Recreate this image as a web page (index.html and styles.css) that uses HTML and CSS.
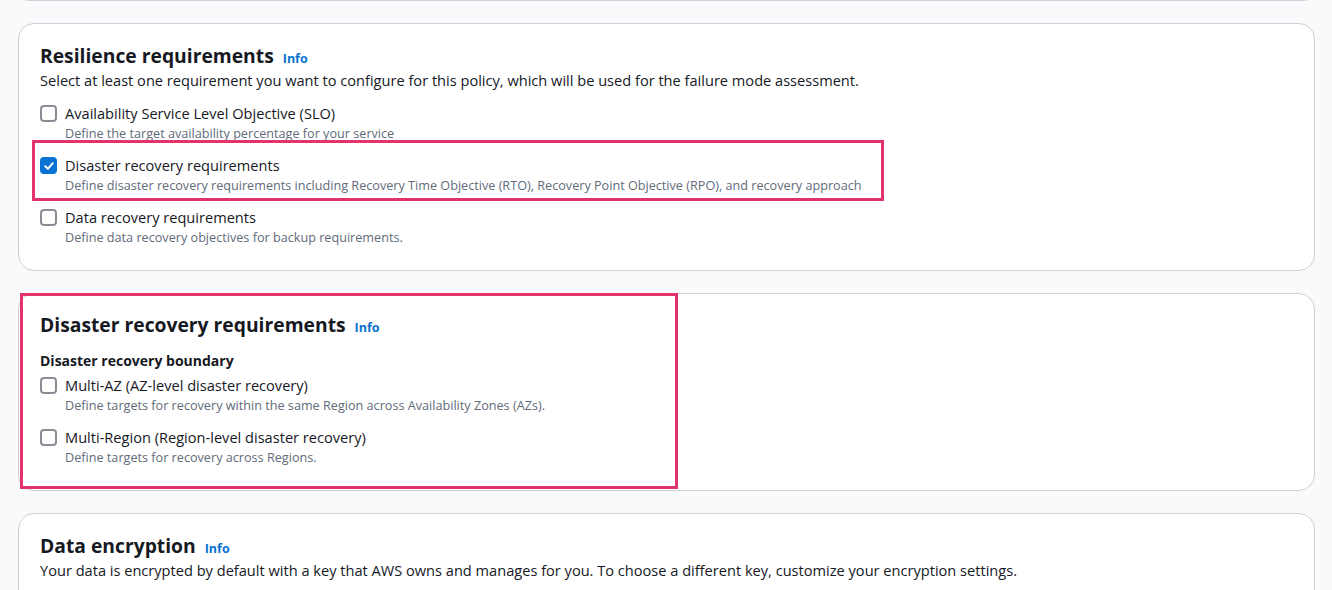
FILE: index.html
```html
<!DOCTYPE html>
<html lang="en">
<head>
  <meta charset="UTF-8">
  <meta name="viewport" content="width=device-width, initial-scale=1.0">
  <title>Resilience policy</title>
  <link rel="stylesheet" href="styles.css">
</head>
<body>
  <div class="page">
    <!-- end of the previous section, cut off by the window -->
    <div class="card card-prev"></div>

    <section class="card">
      <h2 class="card-title">Resilience requirements <a href="#" class="info">Info</a></h2>
      <p class="card-desc">Select at least one requirement you want to configure for this policy, which will be used for the failure mode assessment.</p>
      <div class="options">
        <label class="option">
          <span class="box"></span>
          <span class="option-text">
            <span class="option-label">Availability Service Level Objective (SLO)</span>
            <span class="option-desc">Define the target availability percentage for your service</span>
          </span>
        </label>
        <label class="option">
          <span class="box checked">
            <svg width="12" height="12" viewBox="0 0 12 12"><path d="M2.2 6.2 L4.9 8.8 L9.8 3.2" fill="none" stroke="#fff" stroke-width="2" stroke-linecap="round" stroke-linejoin="round"/></svg>
          </span>
          <span class="option-text">
            <span class="option-label">Disaster recovery requirements</span>
            <span class="option-desc">Define disaster recovery requirements including Recovery Time Objective (RTO), Recovery Point Objective (RPO), and recovery approach</span>
          </span>
        </label>
        <label class="option">
          <span class="box"></span>
          <span class="option-text">
            <span class="option-label">Data recovery requirements</span>
            <span class="option-desc">Define data recovery objectives for backup requirements.</span>
          </span>
        </label>
      </div>
      <div class="mark mark-option"></div>
    </section>

    <section class="card card-dr">
      <h2 class="card-title">Disaster recovery requirements <a href="#" class="info">Info</a></h2>
      <div class="field-label">Disaster recovery boundary</div>
      <div class="options options-tight">
        <label class="option">
          <span class="box"></span>
          <span class="option-text">
            <span class="option-label">Multi-AZ (AZ-level disaster recovery)</span>
            <span class="option-desc">Define targets for recovery within the same Region across Availability Zones (AZs).</span>
          </span>
        </label>
        <label class="option">
          <span class="box"></span>
          <span class="option-text">
            <span class="option-label">Multi-Region (Region-level disaster recovery)</span>
            <span class="option-desc">Define targets for recovery across Regions.</span>
          </span>
        </label>
      </div>
      <div class="mark mark-section"></div>
    </section>

    <section class="card">
      <h2 class="card-title">Data encryption <a href="#" class="info">Info</a></h2>
      <p class="card-desc">Your data is encrypted by default with a key that AWS owns and manages for you. To choose a different key, customize your encryption settings.</p>
    </section>
  </div>
</body>
</html>
```

FILE: styles.css
```css
body {
  margin: 0;
  font-family: "Open Sans", Arial, sans-serif;
  background-color: #fafafc;
  color: #16191f;
}

.page {
  display: flex;
  flex-direction: column;
  gap: 22px;
  padding: 0 17px 0 18px;
}

.card {
  position: relative;
  background-color: #fff;
  border: 1px solid #cfcfd4;
  border-radius: 16px;
  padding: 20px 21px 25px 21px;
}

.card-dr {
  padding-top: 19px;
  padding-bottom: 25px;
}

.card-prev {
  height: 20px;
  margin-top: -21px;
  padding: 0;
}

.card-title {
  margin: 0;
  font-size: 19.3px;
  line-height: 24px;
  font-weight: 700;
}

.info {
  margin-left: 4px;
  font-size: 12.5px;
  font-weight: 700;
  color: #0972d3;
  text-decoration: none;
}

.card-desc {
  margin: -1px 0 0;
  font-size: 14.6px;
  line-height: 20px;
}

.options {
  display: flex;
  flex-direction: column;
  gap: 14px;
  margin-top: 13px;
}

.options-tight {
  margin-top: 4px;
}

.field-label {
  margin-top: 11px;
  font-size: 14px;
  line-height: 20px;
  font-weight: 700;
}

.option {
  display: flex;
  gap: 8px;
  align-items: flex-start;
}

.box {
  box-sizing: border-box;
  flex: none;
  width: 17px;
  height: 17px;
  margin-top: 2px;
  border: 2px solid #8c8c94;
  border-radius: 4px;
  display: flex;
  align-items: center;
  justify-content: center;
}

.box.checked {
  background-color: #0972d3;
  border-color: #0972d3;
}

.option-text {
  display: flex;
  flex-direction: column;
  gap: 2px;
}

.option-label {
  font-size: 14.6px;
  line-height: 20px;
}

.option-desc {
  font-size: 12.65px;
  line-height: 16px;
  color: #5f6b7a;
}

.mark {
  position: absolute;
  border: 3px solid #e2336b;
  box-sizing: border-box;
}

.mark-option {
  left: 13px;
  top: 116px;
  width: 852px;
  height: 61px;
}

.mark-section {
  left: 1px;
  top: -1px;
  width: 658px;
  height: 196px;
}
```
